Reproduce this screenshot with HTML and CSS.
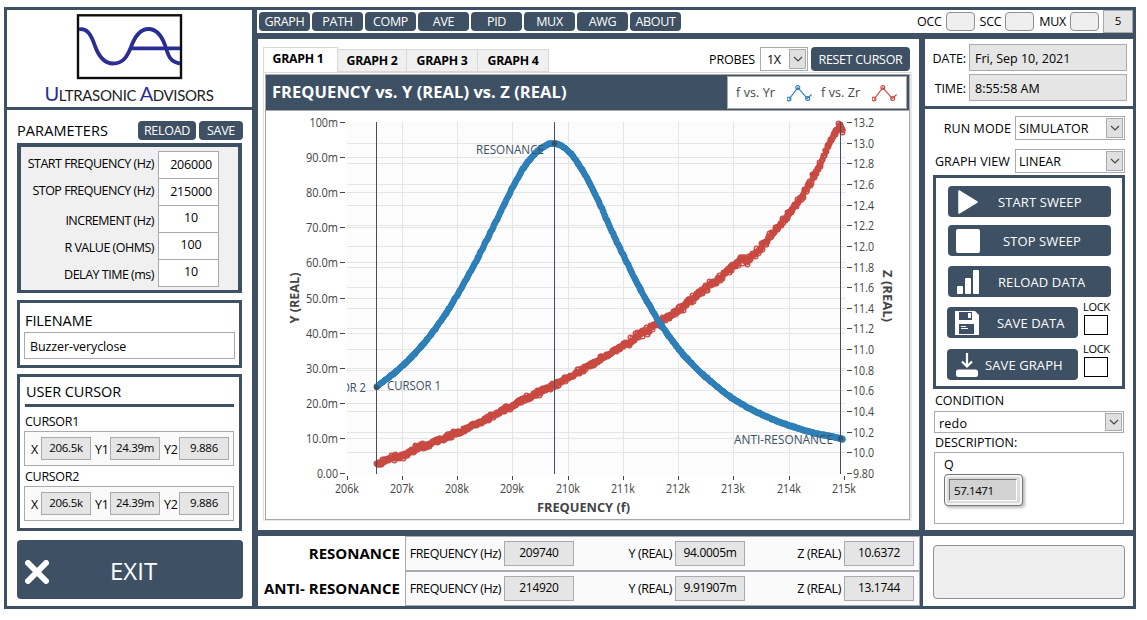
FILE: index.html
```html
<!DOCTYPE html>
<html lang="en">
<head>
  <meta charset="UTF-8">
  <meta name="viewport" content="width=device-width, initial-scale=1.0">
  <title>Ultrasonic Advisors</title>
  <link rel="stylesheet" href="styles.css">
</head>
<body>
  <div class="app">

    <aside class="sidebar">
      <div class="logo">
        <svg width="245" height="97" viewBox="7 10 245 97">
          <rect x="78" y="15.3" width="103" height="62.7" fill="#fff" stroke="#0c0f0c" stroke-width="2.4"/>
          <g fill="none" stroke="#2a2e92" stroke-width="3.8">
            <path d="M79 29.4 C87 28 91 34 95 46 C99 57 104 63.5 113 63.5 C123 63.5 127 57 131 47 C135 36 140 29 148.5 29 C157 29 162 37 165 45 C168 54 169 62 180 63.5"/>
            <path d="M131 48.3 H180"/>
          </g>
          <text class="brand" x="44.5" y="101" textLength="169"><tspan class="brand-cap">U</tspan>LTRASONIC <tspan class="brand-cap">A</tspan>DVISORS</text>
        </svg>
      </div>

      <div class="sidebar-body">
        <div class="params-head">
          <span class="title">PARAMETERS</span>
          <button class="btn btn-reload">RELOAD</button>
          <button class="btn btn-save">SAVE</button>
        </div>
        <div class="params">
          <div class="param"><label for="start">START FREQUENCY (Hz)</label><input id="start" value="206000"></div>
          <div class="param"><label for="stop">STOP FREQUENCY (Hz)</label><input id="stop" value="215000"></div>
          <div class="param low"><label for="inc">INCREMENT (Hz)</label><input id="inc" value="10"></div>
          <div class="param low"><label for="rval">R VALUE (OHMS)</label><input id="rval" value="100"></div>
          <div class="param low"><label for="delay">DELAY TIME (ms)</label><input id="delay" value="10"></div>
        </div>

        <div class="filename">
          <label class="title" for="filename">FILENAME</label>
          <input id="filename" value="Buzzer-veryclose">
        </div>

        <div class="cursors">
          <div class="title">USER CURSOR</div>
          <div class="cursor-name">CURSOR1</div>
          <div class="cursor">
            <span class="axis">X</span><output>206.5k</output>
            <span class="axis">Y1</span><output>24.39m</output>
            <span class="axis">Y2</span><output>9.886</output>
          </div>
          <div class="cursor-name">CURSOR2</div>
          <div class="cursor">
            <span class="axis">X</span><output>206.5k</output>
            <span class="axis">Y1</span><output>24.39m</output>
            <span class="axis">Y2</span><output>9.886</output>
          </div>
        </div>

        <button class="btn exit">
          <svg width="24" height="24" viewBox="0 0 24 24"><path d="M3 3 L21 21 M21 3 L3 21" stroke="#fff" stroke-width="6" stroke-linecap="round"/></svg>
          <span>EXIT</span>
        </button>
      </div>
    </aside>

    <header class="topbar">
      <nav>
        <button class="btn">GRAPH</button>
        <button class="btn">PATH</button>
        <button class="btn">COMP</button>
        <button class="btn">AVE</button>
        <button class="btn">PID</button>
        <button class="btn">MUX</button>
        <button class="btn">AWG</button>
        <button class="btn">ABOUT</button>
      </nav>
      <div class="status">
        <span>OCC</span><i class="led"></i>
        <span>SCC</span><i class="led"></i>
        <span>MUX</span><i class="led"></i>
        <output>5</output>
      </div>
    </header>

    <main class="main">
      <div class="graph-bar">
        <div class="tabs">
          <div class="tab active">GRAPH 1</div>
          <div class="tab">GRAPH 2</div>
          <div class="tab">GRAPH 3</div>
          <div class="tab">GRAPH 4</div>
        </div>
        <div class="graph-tools">
          <span class="probes">PROBES</span>
          <div class="select probe-select"><span>1X</span><i class="arrow"><svg width="10" height="6" viewBox="0 0 10 6"><path d="M1 1 L5 5 L9 1"/></svg></i></div>
          <button class="btn reset">RESET CURSOR</button>
        </div>
      </div>
      <div class="graph-frame">
        <div class="graph">
          <div class="graph-head">
            <h1>FREQUENCY vs. Y (REAL) vs. Z (REAL)</h1>
            <div class="legend">
              <span>f vs. Yr</span>
              <svg class="yr" width="26" height="18" viewBox="0 0 26 18"><path d="M2 15.5 L11 3.5 L20.5 14.5 L25 10.5"/><circle cx="2" cy="15" r="2"/><circle cx="11" cy="3.5" r="2"/><circle cx="21" cy="14.5" r="2"/></svg>
              <span>f vs. Zr</span>
              <svg class="zr" width="26" height="18" viewBox="0 0 26 18"><path d="M2 15.5 L11 3.5 L20.5 14.5 L25 10.5"/><circle cx="2" cy="15" r="2"/><circle cx="11" cy="3.5" r="2"/><circle cx="21" cy="14.5" r="2"/></svg>
            </div>
          </div>
          <svg id="chart" class="chart" width="643" height="408" viewBox="266 111 643 408"></svg>
        </div>
      </div>
    </main>

    <section class="panel">
      <div class="clock">
        <label>DATE:</label><output>Fri, Sep 10, 2021</output>
        <label>TIME:</label><output>8:55:58 AM</output>
      </div>
      <div class="control">
        <div class="mode">
          <label>RUN MODE</label>
          <div class="select"><span>SIMULATOR</span><i class="arrow"><svg width="10" height="6" viewBox="0 0 10 6"><path d="M1 1 L5 5 L9 1"/></svg></i></div>
        </div>
        <div class="mode view">
          <label>GRAPH VIEW</label>
          <div class="select"><span>LINEAR</span><i class="arrow"><svg width="10" height="6" viewBox="0 0 10 6"><path d="M1 1 L5 5 L9 1"/></svg></i></div>
        </div>
        <div class="actions">
          <button class="btn action start"><svg width="30" height="26" viewBox="0 0 30 26"><path d="M6 2 L24 13 L6 24 Z" fill="#fff" stroke="#fff" stroke-width="1.5" stroke-linejoin="round"/></svg><span>START SWEEP</span></button>
          <button class="btn action stop"><svg width="30" height="26" viewBox="0 0 30 26"><rect x="3" y="1" width="24" height="24" rx="2" fill="#fff"/></svg><span>STOP SWEEP</span></button>
          <button class="btn action reload"><svg width="30" height="26" viewBox="0 0 30 26" fill="#fff"><rect x="4" y="17" width="6" height="8" rx="1"/><rect x="12" y="9" width="6" height="16" rx="1"/><rect x="20" y="1" width="6" height="24" rx="1"/></svg><span>RELOAD DATA</span></button>
          <div class="save-row">
            <button class="btn action data"><svg width="30" height="26" viewBox="0 0 30 26"><path d="M3 1 H23 L27 5 V25 H3 Z" fill="#fff"/><path d="M7 2 H20 V10 H7 Z M7 14 H22 V24 H7 Z" fill="#3e5064"/><path d="M16 3 H19 V8 H16 Z M9 16 H14 V17 H9 Z M9 18 H16 V19 H9 Z" fill="#fff"/></svg><span>SAVE DATA</span></button>
            <label class="lock">LOCK<i></i></label>
          </div>
          <div class="save-row">
            <button class="btn action image"><svg width="30" height="26" viewBox="0 0 30 26"><path d="M15 1 V14 M10 9.5 L15 14.5 L20 9.5" fill="none" stroke="#fff" stroke-width="2.2"/><rect x="4" y="17.5" width="22" height="7.5" rx="2.5" fill="#fff"/></svg><span>SAVE GRAPH</span></button>
            <label class="lock">LOCK<i></i></label>
          </div>
        </div>
        <div class="field-name">CONDITION</div>
        <div class="select condition"><span>redo</span><i class="arrow"><svg width="10" height="6" viewBox="0 0 10 6"><path d="M1 1 L5 5 L9 1"/></svg></i></div>
        <div class="field-name description-name">DESCRIPTION:</div>
        <div class="description">
          <div class="q-name">Q</div>
          <div class="q-frame"><output>57.1471</output></div>
        </div>
      </div>
    </section>

    <footer class="footer">
      <div class="results">
        <h2>RESONANCE</h2>
        <div class="result">
          <label>FREQUENCY (Hz)</label><output>209740</output>
          <label>Y (REAL)</label><output>94.0005m</output>
          <label>Z (REAL)</label><output>10.6372</output>
        </div>
        <h2>ANTI- RESONANCE</h2>
        <div class="result">
          <label>FREQUENCY (Hz)</label><output>214920</output>
          <label>Y (REAL)</label><output>9.91907m</output>
          <label>Z (REAL)</label><output>13.1744</output>
        </div>
      </div>
      <div class="message"><div></div></div>
    </footer>
  </div>

  <script>
    const LEFT = 347, RIGHT = 844.5, TOP = 122.5, BOTTOM = 473.5;
    const chart = document.getElementById('chart');
    let out = '';

    function line(x1, y1, x2, y2, cls) {
      out += `<line class="${cls}" x1="${x1}" y1="${y1}" x2="${x2}" y2="${y2}"/>`;
    }
    // w is the width that the label should fill
    function text(x, y, str, w, cls, extra = '') {
      out += `<text class="${cls}" x="${x}" y="${y}" textLength="${w}" lengthAdjust="spacingAndGlyphs" ${extra}>${str}</text>`;
    }
    const snap = v => Math.floor(v) + 0.5;

    out += `<rect x="${LEFT}" y="122" width="498" height="352" fill="#fcfcfc"/>`;

    // left axis
    for (let i = 0; i <= 10; i++) {
      const y = snap(BOTTOM - i * (BOTTOM - TOP) / 10);
      if (i > 0 && i < 10) line(LEFT, y, 845, y, 'grid');
      line(340, y, 345, y, 'tick');
      const label = i === 0 ? '0.00' : i === 10 ? '100m' : i + '0.0m';
      text(338, y + 4.5, label, i === 0 ? 21 : i === 10 ? 28.5 : 32, 'label end');
    }
    // right axis
    for (let i = 0; i <= 17; i++) {
      const y = snap(BOTTOM - i * (BOTTOM - TOP) / 17);
      if (i > 0 && i < 17) line(LEFT, y, 845, y, 'grid');
      line(847, y, 852, y, 'tick');
      text(853, y + 4.5, i === 0 ? '9.80' : (9.8 + i * 0.2).toFixed(1), 21, 'label');
    }
    // frequency axis
    for (let i = 0; i <= 9; i++) {
      const x = snap(LEFT + i * (RIGHT - LEFT) / 9);
      if (i > 0 && i < 9) line(x, 122, x, 474, 'grid');
      line(x, 476, x, 480, 'tick');
      text(x - 0.5, 493, (206 + i) + 'k', 24, 'label mid');
    }

    // key points of both traces
    const yr = [[376.5,387],[402.3,366],[423.3,344],[441.5,320],[457.3,295],[473.3,266.5],[488.3,237],[503.3,206.5],[513.3,186],[523.3,168.5],[533.3,155.5],[543.3,147],[554.3,143.3],[568.3,151],[580,166.5],[590,184],[600,204.5],[609,225],[621.7,252],[640,288.5],[658.3,320.5],[678.3,348.5],[695,367],[713.3,383.5],[735,400],[761.7,414.5],[789.3,425.5],[813.3,432.7],[840,438.3],[844,439]];
    const zr = [[376.5,464],[383,461.5],[393,457.5],[400,456.5],[413.5,450],[457.5,432.7],[483.5,420.5],[513.5,405],[554.3,385],[580,371],[623.3,345.5],[659,323],[678.3,309.5],[700,292.5],[715,281.5],[730,269],[740,261],[748.3,260],[760,248.3],[773.3,233.3],[789.3,214],[801.7,196],[813.3,176.5],[823.3,157],[831.7,139.5],[840,126.5],[844.3,134]];

    function curve(pts) {
      const n = pts.length;
      const m = pts.map((p, i) => {
        const a = pts[Math.max(0, i - 1)], b = pts[Math.min(n - 1, i + 1)];
        return (b[1] - a[1]) / (b[0] - a[0]);
      });
      return x => {
        let i = 0;
        while (i < n - 2 && x > pts[i + 1][0]) i++;
        const h = pts[i + 1][0] - pts[i][0];
        const t = (x - pts[i][0]) / h, t2 = t * t, t3 = t2 * t;
        return (2 * t3 - 3 * t2 + 1) * pts[i][1] + (t3 - 2 * t2 + t) * h * m[i]
          + (3 * t2 - 2 * t3) * pts[i + 1][1] + (t3 - t2) * h * m[i + 1];
      };
    }

    let seed = 7;
    function random() {
      seed = (seed * 16807) % 2147483647;
      return seed / 2147483647;
    }

    // one marker for each 10 Hz step
    function trace(pts, cls, noise) {
      const f = curve(pts);
      out += `<g class="trace ${cls}">`;
      let path = '';
      for (let x = pts[0][0]; x <= 844.3; x += 0.5528) {
        // the signal gets rougher above 211k
        const dy = noise * (x > 620 ? 1.5 : 1) * (random() + random() + random() - 1.5);
        const px = Math.min(snap(x), 842.5), py = snap(f(x) + dy);
        path += (path ? 'L' : 'M') + px + ' ' + py;
        out += `<circle cx="${px}" cy="${py}" r="2.3"/>`;
      }
      out += `<path d="${path}"/></g>`;
    }
    trace(zr, 'zr', 2.4);
    trace(yr, 'yr', 0.2);

    // cursors
    line(376.5, 122, 376.5, 474, 'cursor-line');
    line(554.5, 122, 554.5, 474, 'cursor-line');
    line(840.5, 122, 840.5, 474, 'cursor-line');
    [[376.5, 387.5], [554.5, 143.5], [840.5, 438.5]].forEach(p => {
      out += `<circle cx="${p[0]}" cy="${p[1]}" r="2.6" fill="#3e5064"/>`;
    });
    text(476, 154, 'RESONANCE', 68, 'note');
    text(387, 390, 'CURSOR 1', 54, 'note');
    text(734, 444, 'ANTI-RESONANCE', 99, 'note');
    // the second cursor label runs out of the plot area
    out += '<svg x="347" y="375" width="24" height="20"><text class="note" x="-34" y="17" textLength="53" lengthAdjust="spacingAndGlyphs">CURSOR 2</text></svg>';

    text(583.5, 512, 'FREQUENCY (f)', 93, 'axis-name mid');
    text(0, 0, 'Y (REAL)', 51, 'axis-name mid', 'transform="translate(298.5 298) rotate(-90)"');
    text(0, 0, 'Z (REAL)', 52, 'axis-name mid', 'transform="translate(882.5 296) rotate(90)"');

    chart.innerHTML = out;
  </script>
</body>
</html>
```
FILE: styles.css
```css
* {
  box-sizing: border-box;
}
body {
  margin: 0;
  padding: 7px 0 0 4px;
  background: #fff;
  color: #000;
  font-family: "Open Sans", "Noto Sans", sans-serif;
  font-size: 12.5px;
  letter-spacing: -0.3px;
  overflow: hidden;
}
button, input, output {
  font: inherit;
  letter-spacing: inherit;
  color: inherit;
  margin: 0;
  padding: 0;
}
h1, h2 {
  margin: 0;
}
i {
  font-style: normal;
}
.app {
  width: 1132px;
  height: 602px;
  border: 3px solid #3e5064;
  background: #3e5064;
  display: grid;
  grid-template-columns: 245px 661px 208px;
  grid-template-rows: 23px 491px 70px;
  gap: 6px;
}
.btn {
  display: flex;
  align-items: center;
  justify-content: center;
  border: none;
  border-radius: 4px;
  background: #3e5064;
  color: #fff;
  font-size: 12.5px;
  font-weight: 500;
  white-space: nowrap;
}
input {
  background: #fff;
  border: 1px solid #a9a9b0;
}
output {
  background: #e5e5e5;
  border: 1px solid #a9a9b0;
}

/* sidebar */
.sidebar {
  grid-row: 1 / 4;
  background: #fff;
}
.logo {
  height: 100px;
  border-bottom: 3px solid #3e5064;
}
.logo svg {
  display: block;
}
.brand {
  font-family: Lato, sans-serif;
  font-size: 15px;
  fill: #222;
}
.brand-cap {
  font-size: 20px;
  fill: #2a2e92;
}
.sidebar-body {
  padding: 11px 9px 0 10px;
}
.title {
  font-size: 14.5px;
  letter-spacing: -0.1px;
}
.params-head {
  display: flex;
  height: 19px;
  align-items: center;
}
.params-head .title {
  flex: 1;
  letter-spacing: 0.1px;
}
.btn-reload {
  width: 58px;
  height: 19px;
  margin-right: 3px;
}
.btn-save {
  width: 44px;
  height: 19px;
}
.params {
  width: 225px;
  height: 150px;
  margin-top: 3px;
  padding-top: 4px;
  border: 4px solid #3e5064;
  border-bottom-width: 3px;
  background: #f0f0f0;
}
.param {
  display: flex;
  justify-content: flex-end;
  height: 27px;
  padding-right: 19px;
  line-height: 25px;
  letter-spacing: -0.5px;
}
.param.low label {
  padding-top: 3px;
}
.param input {
  width: 61px;
  height: 28px;
  margin-left: 4px;
  text-align: center;
  padding: 0 0 1px 5px;
  letter-spacing: -0.2px;
}
.param.low input {
  padding: 0 0 4px 5px;
}
.filename {
  width: 225px;
  height: 68px;
  margin-top: 7px;
  border: 3px solid #3e5064;
  padding: 8px 4px 0 4px;
}
.filename label {
  display: block;
  line-height: 20px;
  padding-left: 1px;
}
.filename input {
  display: block;
  width: 211px;
  height: 27px;
  margin-top: 1px;
  padding: 1px 0 0 5px;
  letter-spacing: -0.1px;
}
.cursors {
  width: 225px;
  height: 157px;
  margin-top: 6px;
  border: 3px solid #3e5064;
  padding: 5px 5px 0 4px;
}
.cursors .title {
  line-height: 20px;
  height: 25px;
  margin-left: 1px;
  padding-left: 1px;
  border-bottom: 3px solid #3e5064;
}
.cursor-name {
  height: 20px;
  line-height: 21px;
  margin-top: 4px;
  padding-left: 1px;
}
.cursor-name + .cursor + .cursor-name {
  margin-top: 0;
}
.cursor {
  display: flex;
  align-items: center;
  width: 210px;
  height: 35px;
  background: #fafafa;
  border: 1px solid #a9a9b0;
  padding-right: 4px;
}
.axis {
  width: 16px;
  padding-left: 6px;
  padding-top: 2px;
}
.axis + output + .axis {
  width: 19px;
  padding-left: 4px;
}
.cursor output {
  width: 50px;
  height: 23px;
  line-height: 19px;
  text-align: center;
  font-size: 11.5px;
}
.exit {
  width: 226px;
  height: 59px;
  margin-top: 9px;
  justify-content: flex-start;
  padding: 4px 0 0 8px;
  font-size: 24px;
  font-weight: 400;
  letter-spacing: 0;
}
.exit span {
  margin: -3px 0 0 61px;
}

/* top bar */
.topbar {
  grid-column: 2 / 4;
  margin-left: -1px;
  padding-left: 2px;
  background: #fff;
  display: flex;
  align-items: center;
  justify-content: space-between;
}
.topbar nav {
  display: flex;
  gap: 2px;
}
.topbar nav .btn {
  width: 51px;
  height: 19px;
}
.status {
  display: flex;
  align-items: center;
}
.led {
  width: 29px;
  height: 19px;
  margin: 0 5px 0 4px;
  background: #efefef;
  border: 1px solid #8f8f8f;
  border-radius: 4px;
}
.led:nth-last-child(2) {
  margin-right: 4px;
}
.status output {
  width: 30px;
  height: 23px;
  line-height: 20px;
  text-align: center;
  font-size: 11.5px;
}

/* graph */
.main {
  background: #fff;
  padding: 8px 7px 0 5px;
}
.graph-bar {
  display: flex;
  justify-content: space-between;
  height: 25px;
}
.tabs {
  display: flex;
  align-items: flex-end;
}
.tab {
  width: 71px;
  height: 23px;
  line-height: 22px;
  text-align: center;
  font-weight: 700;
  font-size: 12.3px;
  background: #f0f0f0;
  border: 1px solid #d9d9d9;
  border-left: none;
}
.tab:nth-child(2) {
  width: 69px;
}
.tab.active {
  width: 75px;
  height: 25px;
  padding-right: 5px;
  background: #fff;
  border-left: 1px solid #d9d9d9;
  border-bottom: none;
}
.graph-tools {
  display: flex;
  height: 24px;
  padding-right: 2px;
}
.probes {
  line-height: 25px;
  margin-right: 5px;
  letter-spacing: -0.15px;
}
.select {
  display: flex;
  align-items: center;
  justify-content: space-between;
  height: 24px;
  padding: 1px 1px 1px 3px;
  background: #fff;
  border: 1px solid #a9a9b0;
}
.arrow {
  display: flex;
  align-items: center;
  justify-content: center;
  width: 17px;
  height: 20px;
  background: #e0e0e0;
  border: 1px solid #a9a9b0;
}
.arrow path {
  fill: none;
  stroke: #444;
  stroke-width: 1.1;
}
.probe-select {
  width: 48px;
  padding-left: 6px;
  margin-right: 3px;
}
.reset {
  width: 99px;
}
.graph-frame {
  height: 449px;
  padding: 1px 1px 0 1px;
  border: 1px solid #dcdcdc;
  border-right: 2px solid #e8e8e8;
  border-bottom: 2px solid #e8e8e8;
}
.graph {
  width: 645px;
  border: 1px solid #a9a9a9;
}
.graph-head {
  display: flex;
  align-items: center;
  justify-content: space-between;
  height: 36px;
  padding: 0 2px 0 6px;
  background: #3e5064;
  border-bottom: 1px solid #a9a9a9;
  color: #fff;
}
.graph-head h1 {
  font-size: 16.5px;
  font-weight: 700;
  line-height: 32px;
  letter-spacing: 0.06px;
  padding-bottom: 2px;
}
.legend {
  display: flex;
  align-items: center;
  width: 180px;
  height: 33px;
  padding-left: 8px;
  background: #fff;
  border: 1px solid #a9a9b0;
  color: #444;
  letter-spacing: 0.1px;
}
.legend span {
  width: 40px;
  white-space: nowrap;
}
.legend svg {
  margin: 0 8px 0 12px;
  fill: none;
  stroke-width: 1.1;
}
.yr {
  stroke: #2f7fb8;
}
.zr {
  stroke: #c94a42;
}
.chart {
  display: block;
}
.chart text {
  letter-spacing: 0;
}
.grid {
  stroke: #e5e5e5;
}
.tick {
  stroke: #444;
}
.label {
  font-size: 12px;
  fill: #444;
}
.end {
  text-anchor: end;
}
.mid {
  text-anchor: middle;
}
.note {
  font-size: 12px;
  fill: #3e5064;
}
.axis-name {
  font-size: 12.5px;
  font-weight: 700;
  fill: #444;
}
.trace {
  fill: none;
  stroke-width: 1.3;
}
.cursor-line {
  stroke: #3e5064;
}

/* right panel */
.panel {
  background: #fff;
  letter-spacing: 0;
}
.clock {
  display: grid;
  grid-template-columns: 41px 158px;
  grid-template-rows: 27px 27px;
  column-gap: 3px;
  row-gap: 3px;
  height: 70px;
  padding-top: 5px;
  border-bottom: 3px solid #3e5064;
  line-height: 30px;
}
.clock label {
  text-align: right;
  letter-spacing: -0.1px;
}
.clock output {
  line-height: 27px;
  padding-left: 5px;
}
.control {
  padding: 7px 8px 0 8px;
}
.mode {
  display: flex;
  justify-content: flex-end;
  height: 24px;
  line-height: 25px;
}
.mode label {
  letter-spacing: 0.1px;
}
.mode .select {
  width: 110px;
  margin-left: 4px;
}
.view {
  margin-top: 9px;
}
.view .select {
  margin-left: 5px;
}
.actions {
  width: 192px;
  height: 214px;
  margin-top: 2px;
  border: 3px solid #3e5064;
  padding: 8px 0 0 11px;
}
.action {
  width: 163px;
  height: 31px;
  margin-left: 1px;
  padding: 1px 0 0 5px;
  justify-content: flex-start;
  font-size: 13px;
  letter-spacing: 0.1px;
}
.start span {
  margin-left: 15px;
}
.stop {
  margin-top: 8px;
}
.stop span {
  margin-left: 20px;
}
.reload {
  margin-top: 10px;
}
.reload span {
  margin-left: 15px;
}
.save-row {
  display: flex;
  height: 31px;
  margin-top: 10px;
}
.save-row + .save-row {
  margin-top: 11px;
}
.save-row .action {
  width: 131px;
  margin-left: 0;
}
.data span {
  margin-left: 15px;
}
.image span {
  margin-left: 3px;
}
.lock {
  margin: -7px 0 0 5px;
  font-size: 11px;
  line-height: 14px;
  letter-spacing: -0.3px;
}
.lock i {
  display: block;
  width: 24px;
  height: 20px;
  margin: 1px 0 0 1px;
  border: 1px solid #000;
}
.field-name {
  height: 22px;
  line-height: 23px;
  padding-left: 2px;
  letter-spacing: 0;
}
.condition {
  width: 190px;
  height: 22px;
  margin-left: 1px;
  padding-left: 4px;
}
.condition span {
  padding-top: 2px;
  letter-spacing: 0.2px;
}
.condition .arrow {
  height: 18px;
}
.description-name {
  height: 19px;
  line-height: 19px;
}
.description {
  width: 190px;
  height: 72px;
  margin-left: 1px;
  padding: 3px 9px;
  border: 1px solid #a9a9b0;
}
.q-name {
  height: 18px;
  line-height: 17px;
}
.q-frame {
  width: 79px;
  height: 32px;
  padding: 4px;
  background: #dcdcdc;
  border: 1px solid #777;
  border-radius: 4px;
  box-shadow: inset 0 0 0 2px #f4f4f4, 2px 2px 3px #bbb;
}
.q-frame output {
  display: block;
  width: 68px;
  height: 22px;
  line-height: 21px;
  padding-left: 4px;
  background: #d2d2d2;
  border: 1px solid #777;
  border-right-color: #fff;
  border-bottom-color: #fff;
  font-size: 11.5px;
  letter-spacing: -0.4px;
}

/* footer */
.footer {
  grid-column: 2 / 4;
  display: grid;
  grid-template-columns: 662px 210px;
  gap: 3px;
}
.results {
  display: grid;
  grid-template-columns: 142px 515px;
  grid-template-rows: 35px 35px;
  column-gap: 5px;
  background: #fff;
}
.results h2 {
  font-size: 15px;
  line-height: 34px;
  text-align: right;
  letter-spacing: 0;
  white-space: nowrap;
}
.result {
  display: grid;
  grid-template-columns: 98px 70px 101px 70px 99px 70px;
  padding-top: 4px;
  background: #fafafa;
  border: 1px solid #a9a9b0;
  line-height: 25px;
}
.result label {
  text-align: right;
  padding-right: 3px;
  white-space: nowrap;
  letter-spacing: -0.4px;
}
.result output {
  height: 25px;
  line-height: 22px;
  text-align: center;
  font-size: 12px;
}
.message {
  background: #fff;
  padding: 9px 8px 0 10px;
}
.message div {
  height: 54px;
  background: #efefef;
  border: 1px solid #8f8f8f;
  border-radius: 4px;
}
```
